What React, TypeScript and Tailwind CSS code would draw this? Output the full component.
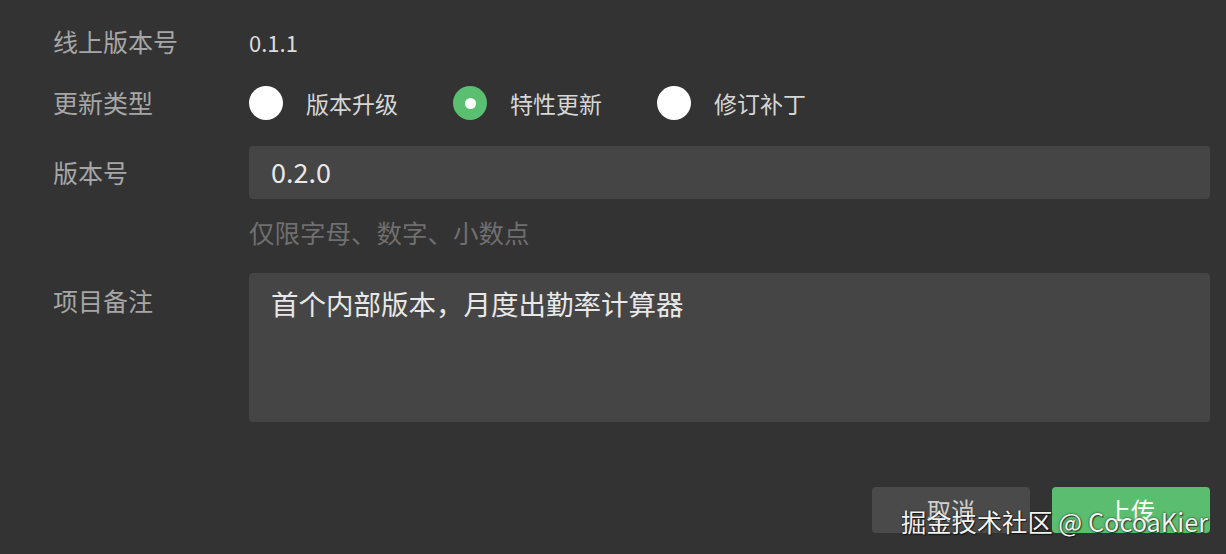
import { useState } from "react";

const font = { fontFamily: '"Noto Sans CJK SC", "Noto Sans", sans-serif' };

const types = ["版本升级", "特性更新", "修订补丁"];

export default function App() {
  const [type, setType] = useState("特性更新");

  return (
    <div
      className="relative w-[1226px] h-[554px] bg-[#333333] overflow-hidden pl-[53px] pr-[16px] pt-[25px]"
      style={font}
    >
      {/* 线上版本号 */}
      <div className="flex items-center h-[34px]">
        <div className="w-[196px] text-[25px] text-[#a6a6a6]">线上版本号</div>
        <div className="text-[22px] text-[#dcdcdc]">0.1.1</div>
      </div>

      {/* 更新类型 */}
      <div className="flex items-center h-[34px] mt-[27px]">
        <div className="w-[196px] text-[25px] text-[#a6a6a6]">更新类型</div>
        <div className="flex items-center gap-[55px]">
          {types.map((t) => (
            <button
              key={t}
              onClick={() => setType(t)}
              className="flex items-center gap-[23px]"
            >
              {type === t ? (
                <span className="w-[34px] h-[34px] rounded-full bg-[#5bbf72] flex items-center justify-center">
                  <span className="w-[11px] h-[11px] rounded-full bg-white" />
                </span>
              ) : (
                <span className="w-[34px] h-[34px] rounded-full bg-white" />
              )}
              <span className="text-[23px] text-[#d6d6d6]">{t}</span>
            </button>
          ))}
        </div>
      </div>

      {/* 版本号 */}
      <div className="flex items-center mt-[26px]">
        <div className="w-[196px] text-[25px] text-[#a6a6a6]">版本号</div>
        <div className="flex-1 h-[53px] rounded-[4px] bg-[#454545] flex items-center px-[22px] text-[27px] text-[#e8e8e8]">
          0.2.0
        </div>
      </div>
      <div className="ml-[196px] mt-[18px] h-[30px] flex items-center text-[25.5px] text-[#6f6f6f]">
        仅限字母、数字、小数点
      </div>

      {/* 项目备注 */}
      <div className="flex items-start mt-[26px]">
        <div className="w-[196px] mt-[10px] leading-[34px] text-[25px] text-[#a6a6a6]">
          项目备注
        </div>
        <div className="flex-1 h-[149px] rounded-[4px] bg-[#454545] px-[22px] pt-[12px] leading-[36px] text-[27.5px] text-[#e8e8e8]">
          首个内部版本，月度出勤率计算器
        </div>
      </div>

      {/* 按钮 */}
      <div className="flex justify-end gap-[22px] mt-[65px]">
        <button className="w-[158px] h-[46px] rounded-[4px] bg-[#4a4a4a] text-[24px] text-[#cfcfcf]">
          取消
        </button>
        <button className="w-[158px] h-[46px] rounded-[4px] bg-[#5bbd6f] text-[24px] text-white">
          上传
        </button>
      </div>

      {/* watermark */}
      <div className="absolute right-[18px] bottom-[20px] text-[25.3px] leading-none text-[#f2f2f2] [text-shadow:0_0_2px_rgba(0,0,0,0.8),1px_1px_1px_rgba(0,0,0,0.6)]">
        掘金技术社区 @ CocoaKier
      </div>
    </div>
  );
}
